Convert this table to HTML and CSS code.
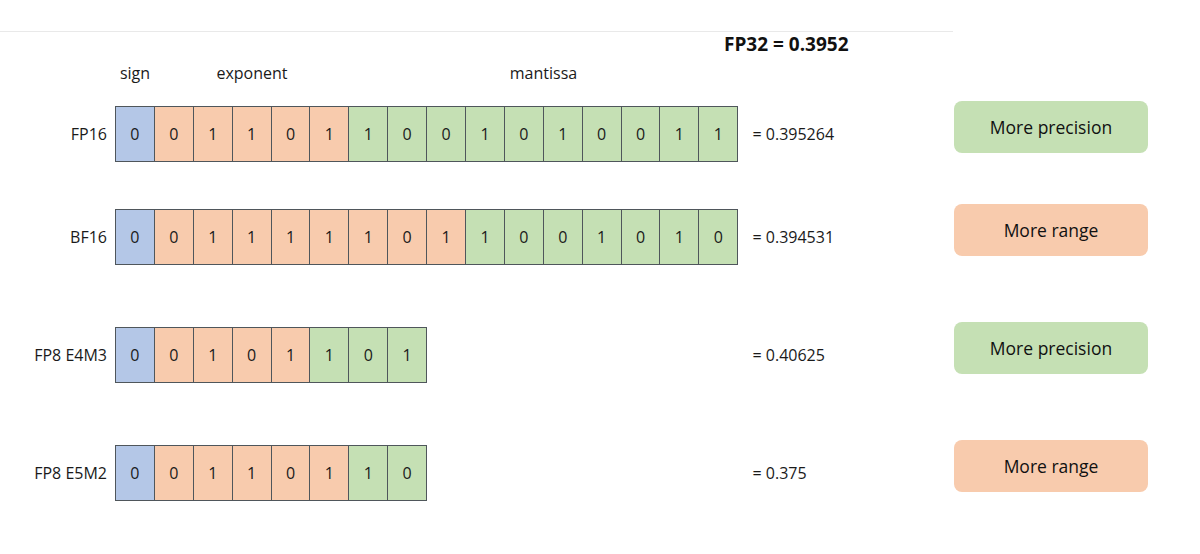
FILE: index.html
```html
<!DOCTYPE html>
<html lang="en">
<head>
<meta charset="utf-8">
<title>FP formats</title>
<link rel="stylesheet" href="styles.css">
</head>
<body>
<div class="topline"></div>
<div class="title">FP32 = 0.3952</div>
<div class="sections">
  <div class="sec sec-sign">sign</div>
  <div class="sec sec-exp">exponent</div>
  <div class="sec sec-man">mantissa</div>
</div>

<div class="row row-first">
  <div class="label">FP16</div>
  <div class="bits">
    <div class="cell s">0</div>
    <div class="cell e">0</div><div class="cell e">1</div><div class="cell e">1</div><div class="cell e">0</div><div class="cell e">1</div>
    <div class="cell m">1</div><div class="cell m">0</div><div class="cell m">0</div><div class="cell m">1</div><div class="cell m">0</div><div class="cell m">1</div><div class="cell m">0</div><div class="cell m">0</div><div class="cell m">1</div><div class="cell m">1</div>
  </div>
  <div class="value">= 0.395264</div>
  <div class="badge green">More precision</div>
</div>

<div class="row row-tight">
  <div class="label">BF16</div>
  <div class="bits">
    <div class="cell s">0</div>
    <div class="cell e">0</div><div class="cell e">1</div><div class="cell e">1</div><div class="cell e">1</div><div class="cell e">1</div><div class="cell e">1</div><div class="cell e">0</div><div class="cell e">1</div>
    <div class="cell m">1</div><div class="cell m">0</div><div class="cell m">0</div><div class="cell m">1</div><div class="cell m">0</div><div class="cell m">1</div><div class="cell m">0</div>
  </div>
  <div class="value">= 0.394531</div>
  <div class="badge orange">More range</div>
</div>

<div class="row row-wide">
  <div class="label">FP8 E4M3</div>
  <div class="bits">
    <div class="cell s">0</div>
    <div class="cell e">0</div><div class="cell e">1</div><div class="cell e">0</div><div class="cell e">1</div>
    <div class="cell m">1</div><div class="cell m">0</div><div class="cell m">1</div>
  </div>
  <div class="value">= 0.40625</div>
  <div class="badge green">More precision</div>
</div>

<div class="row row-wide">
  <div class="label">FP8 E5M2</div>
  <div class="bits">
    <div class="cell s">0</div>
    <div class="cell e">0</div><div class="cell e">1</div><div class="cell e">1</div><div class="cell e">0</div><div class="cell e">1</div>
    <div class="cell m">1</div><div class="cell m">0</div>
  </div>
  <div class="value">= 0.375</div>
  <div class="badge orange">More range</div>
</div>
</body>
</html>
```

FILE: styles.css
```css
* { box-sizing: border-box; }

body {
  margin: 0;
  background: #ffffff;
  color: #1a1a1a;
  font-family: "Open Sans", "Liberation Sans", sans-serif;
  font-size: 16px;
}

.topline {
  margin-top: 31px;
  width: 953px;
  border-top: 1px solid #e9e9e9;
}

.title {
  margin-left: 724px;
  font-weight: 700;
  font-size: 19px;
  line-height: 24px;
  color: #111;
}

.sections {
  display: flex;
  margin-left: 115px;
  margin-top: 6px;
  line-height: 22px;
}

.sec { text-align: center; }
.sec-sign { width: 40px; }
.sec-exp { width: 194px; }
.sec-man { width: 389px; }

.row {
  display: flex;
  align-items: center;
}

.row-first { margin-top: 22px; }
.row-tight { margin-top: 47px; }
.row-wide { margin-top: 62px; }

.label {
  width: 115px;
  padding-right: 8px;
  text-align: right;
  white-space: nowrap;
}

.bits {
  display: flex;
  width: 623.5px;
}

.cell {
  width: 39.9px;
  height: 56px;
  margin-left: -1px;
  border: 1px solid #4f565b;
  display: flex;
  align-items: center;
  justify-content: center;
}

.cell:first-child { margin-left: 0; }

.s { background: #b4c7e7; }
.e { background: #f8cbad; }
.m { background: #c5e0b4; }

.value {
  width: 215.5px;
  padding-left: 14px;
  white-space: nowrap;
}

.badge {
  align-self: flex-start;
  margin-top: -5px;
  width: 194px;
  height: 52px;
  border-radius: 8px;
  display: flex;
  align-items: center;
  justify-content: center;
  font-size: 17.5px;
  color: #111;
}

.green { background: #c5e0b4; }
.orange { background: #f8cbad; }
```
